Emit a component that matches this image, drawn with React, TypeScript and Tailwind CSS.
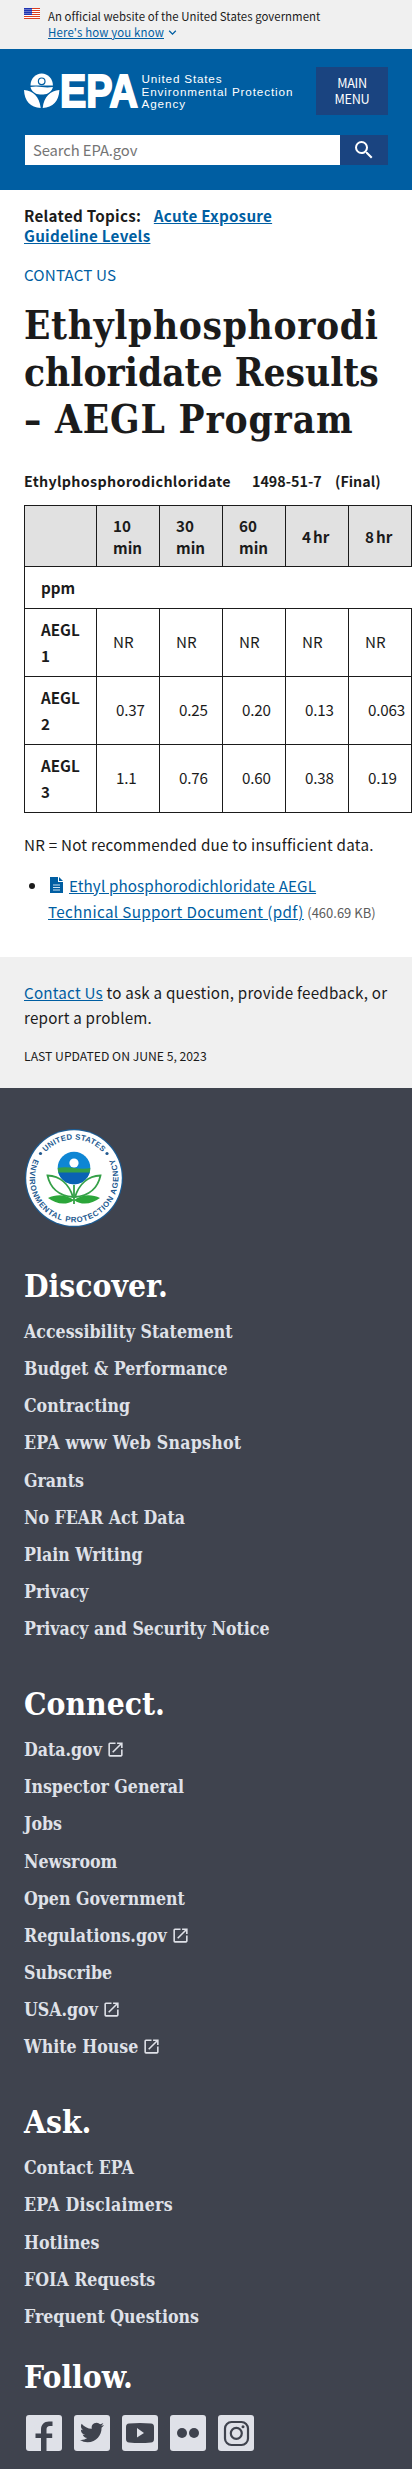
import { ReactNode } from "react";
import { MdOpenInNew, MdSearch, MdExpandMore } from "react-icons/md";

const sans = "font-['Noto_Sans_CJK_SC',sans-serif]";
const serif = "font-['DejaVu_Serif_Condensed','DejaVu_Serif',serif] font-bold";

function Flag() {
  return (
    <svg className="block h-[11px] w-4" viewBox="0 0 16 11">
      <rect width="16" height="11" fill="#fff" />
      {[0, 2, 4, 6, 8, 10].map((y) => (
        <rect key={y} y={y} width="16" height="1" fill="#db3e1f" />
      ))}
      <rect width="8" height="7" fill="#1e33b1" />
      {[1, 3, 5].map((y) =>
        [1, 3, 5, 7].map((x) => <rect key={`${x}-${y}`} x={x - 0.4} y={y} width="0.8" height="0.8" fill="#fff" />)
      )}
    </svg>
  );
}

function EpaLogo() {
  return (
    <svg className="block h-[60px] w-[270px]" viewBox="0 -12 270 60" fill="#fff">
      <path d="M6.500 12.500a11.200 12 0 0 1 22.400 0z" />
      <circle cx="17.700" cy="8.300" r="3.300" fill="none" stroke="#005ea2" strokeWidth="1.200" />
      <path d="M6.500 14q5.500-.8 11.200 0t11.200 0c-.8 4.300-5 7.500-9.600 7.500h-3.200c-4.600 0-8.800-3.200-9.600-7.500z" />
      <path d="M0 17c9 .5 15.500 7 16.700 18C6.500 34.500.5 28 0 17zM35.400 17c-9 .5-15.500 7-16.700 18 10.200-.5 16.200-7 16.700-18z" />
      <text x="36" y="34" fontFamily="Liberation Sans, sans-serif" fontWeight="700" fontSize="46" stroke="#fff" strokeWidth="2" textLength="78" lengthAdjust="spacingAndGlyphs">EPA</text>
      <g fontFamily="Liberation Sans, sans-serif" fontSize="11.700">
        <text x="117.500" y="9.800" textLength="80">United States</text>
        <text x="117.500" y="22.500" textLength="151">Environmental Protection</text>
        <text x="117.500" y="35.200" textLength="43.500">Agency</text>
      </g>
    </svg>
  );
}

function Seal() {
  return (
    <svg className="-ml-0.5 block size-[104px]" viewBox="-52 -52 104 104">
      <defs>
        <path id="ringTop" d="M-38.500 0a38.500 38.500 0 0 1 77 0" />
        <path id="ringBottom" d="M-38.800 -21.500a44.300 44.300 0 1 0 77.600 0" />
        <clipPath id="bloom">
          <circle cy="-10" r="16.300" />
        </clipPath>
      </defs>
      <circle r="49" fill="#1c5c93" />
      <circle r="47.800" fill="#fff" />
      <g fontFamily="Liberation Sans, sans-serif" fontWeight="700" fontSize="7.800" fill="#22598f">
        <text>
          <textPath href="#ringTop" startOffset="50%" textAnchor="middle" textLength="64">UNITED STATES</textPath>
        </text>
        <text>
          <textPath href="#ringBottom" startOffset="50%" textAnchor="middle" textLength="178">ENVIRONMENTAL PROTECTION AGENCY</textPath>
        </text>
      </g>
      <circle cx="-33.500" cy="-24.500" r="1.600" fill="#22598f" />
      <circle cx="33" cy="-24.500" r="1.600" fill="#22598f" />
      <g clipPath="url(#bloom)">
        <rect x="-17" y="-27" width="34" height="34" fill="#0e86d4" />
        <circle cy="-15" r="4.600" fill="#fff" />
        <path d="M-17-10q8-1.500 17 0t17 0v5h-34z" fill="#35a048" />
        <rect x="-17" y="-5.500" width="34" height="13" fill="#0a62b4" />
      </g>
      <g fill="none" stroke="#35a048" strokeWidth="1.800">
        <path d="M0 26V7" />
        <path d="M-1 19C-5 6-14-2-26.500-2.500-24 9-16 18-1 19zM1 19C5 6 14-2 26.500-2.500 24 9 16 18 1 19z" />
      </g>
      <path d="M0 22c-8-6-18-6-26-2 8 6 18 8 26 2zM0 22c8-6 18-6 26-2-8 6-18 8-26 2z" fill="#2ca63a" />
    </svg>
  );
}

function FileIcon() {
  return (
    <svg className="ml-[1.500px] mr-[6.500px] inline-block h-4 w-[13px] align-[-1px]" viewBox="0 0 13 16">
      <path d="M0 0h8v5h5v11H0z" fill="#005ea2" />
      <path d="M9 0l4 4H9z" fill="#005ea2" />
      <path d="M3 8h7M3 10.500h7M3 13h7" stroke="#cfe3f2" strokeWidth="1" />
    </svg>
  );
}

function Social({ children }: { children: ReactNode }) {
  return (
    <svg className="block size-9" viewBox="0 0 36 36">
      <rect width="36" height="36" rx="3" fill="#dfe1e8" />
      {children}
    </svg>
  );
}

const th = "border border-[#1b1b1b] px-4 text-left font-bold";

const headers = [["10", "min"], ["30", "min"], ["60", "min"], ["4 hr"], ["8 hr"]];
const rows = [
  { n: "1", v: ["NR", "NR", "NR", "NR", "NR"] },
  { n: "2", v: ["0.37", "0.25", "0.20", "0.13", "0.063"] },
  { n: "3", v: ["1.1", "0.76", "0.60", "0.38", "0.19"] },
];

function LinkGroup({ title, links, className }: { title: string; links: string[]; className: string }) {
  return (
    <section className={className}>
      <h2 className="text-[31.500px] leading-[38px] text-white">{title}</h2>
      <ul className="mt-[8.500px] text-[17.600px] leading-[37.130px] text-[#dfe1e8]">
        {links.map((l) => (
          <li key={l} className={l.startsWith("EPA") ? "tracking-[.25px]" : "flex items-center"}>
            {l.replace("*", "")}
            {l.endsWith("*") && <MdOpenInNew className="ml-1 size-[19px]" />}
          </li>
        ))}
      </ul>
    </section>
  );
}

export default function App() {
  return (
    <div className={`w-[412px] overflow-hidden bg-white text-[15.200px] text-[#1b1b1b] ${sans}`}>
      <div className="flex h-[49px] gap-2 bg-[#f0f0f0] pl-6 pt-2">
        <Flag />
        <div className="text-[11.400px] leading-4 tracking-[.04px]">
          <p>An official website of the United States government</p>
          <p className="flex items-center text-[#005ea2]">
            <span className="tracking-[.16px] underline">Here's how you know</span>
            <MdExpandMore className="ml-px size-[15px]" />
          </p>
        </div>
      </div>

      <header className="h-[141px] bg-[#005ea2] px-6 pt-[18px]">
        <div className="flex h-12 items-center justify-between">
          <EpaLogo />
          <button className="h-12 w-[72px] bg-[#1a4480] text-[12.700px] leading-4 tracking-[-.3px] text-white">
            MAIN
            <br />
            MENU
          </button>
        </div>
        <div className="mt-5 flex h-[30px]">
          <div className="ml-px flex flex-1 items-center bg-white pl-2 text-[14.800px] tracking-[-.1px] text-[#757575]">Search EPA.gov</div>
          <div className="flex w-12 items-center justify-center bg-[#1a4480] text-white">
            <MdSearch className="size-6" />
          </div>
        </div>
      </header>

      <main className="h-[767px] px-6 pt-[15px]">
        <p className="font-bold leading-5 tracking-[.26px]">
          Related Topics: <a className="ml-[9px] text-[#005ea2] underline">Acute Exposure</a>
          <br />
          <a className="text-[#005ea2] underline">Guideline Levels</a>
        </p>
        <p className="mt-4 leading-[26px] tracking-[.15px] text-[#005ea2]">CONTACT US</p>
        <h1 className={`mt-4 whitespace-nowrap text-[38.500px] leading-[46.850px] ${serif}`}>
          <span className="tracking-[.65px]">Ethylphosphorodi</span>
          <br />
          <span>chloridate Results</span>
          <br />
          <span className="tracking-[.85px]">– AEGL Program</span>
        </h1>
        <p className="mt-[24.500px] flex whitespace-nowrap text-[14.300px] font-bold leading-[26px]">
          <span className="w-[228px] tracking-[.32px]">Ethylphosphorodichloridate</span>
          <span className="w-[83px]">1498-51-7</span>
          <span>(Final)</span>
        </p>
        <table className="mt-[11px] w-[451px] table-fixed border-collapse">
          <colgroup>
            <col className="w-[72px]" />
            {headers.map((_, i) => (
              <col key={i} className="w-[63px]" />
            ))}
            <col className="w-[63px]" />
          </colgroup>
          <thead className="bg-[#e1e1e1]">
            <tr className="h-[61px] leading-[22.500px] [word-spacing:-1.500px]">
              <th className={th} />
              {headers.map((h) => (
                <th key={h[0]} className={th}>
                  {h[0]}
                  {h[1] && <br />}
                  {h[1]}
                </th>
              ))}
              <th className={th} />
            </tr>
          </thead>
          <tbody className="leading-[25.500px]">
            <tr className="h-[42px]">
              <th colSpan={7} className={th}>ppm</th>
            </tr>
            {rows.map((r) => (
              <tr key={r.n} className="h-[68px]">
                <th className={th}>
                  AEGL
                  <br />
                  {r.n}
                </th>
                {r.v.map((v, i) => (
                  <td key={i} className={r.n === "1" ? "border border-[#1b1b1b] pb-0.5 pl-4" : "border border-[#1b1b1b] pb-0.5 pl-[19px] tracking-[-.2px]"}>
                    {v}
                  </td>
                ))}
                <td className="border border-[#1b1b1b]" />
              </tr>
            ))}
          </tbody>
        </table>
        <p className="mt-[18px] leading-[26px] tracking-[.23px]">NR = Not recommended due to insufficient data.</p>
        <ul className="mt-[14.500px] list-disc pl-6 leading-[26px]">
          <li className="whitespace-nowrap">
            <FileIcon />
            <a className="text-[#005ea2] underline">
              <span className="tracking-[.13px]">Ethyl phosphorodichloridate AEGL</span>
              <br />
              <span className="tracking-[.36px]">Technical Support Document (pdf)</span>
            </a>{" "}
            <span className="text-[13px] text-[#5c5c5c]">(460.69 KB)</span>
          </li>
        </ul>
      </main>

      <div className="h-[131px] bg-[#f0f0f0] px-6 pt-[22.500px] leading-[25.500px]">
        <p className="whitespace-nowrap tracking-[.21px]">
          <a className="text-[#005ea2] underline">Contact Us</a> to ask a question, provide feedback, or
          <br />
          report a problem.
        </p>
        <p className="mt-[13px] text-[12.200px]">LAST UPDATED ON JUNE 5, 2023</p>
      </div>

      <footer className={`h-[1381px] bg-[#3f434e] px-6 pt-[38px] ${serif}`}>
        <Seal />
        <LinkGroup
          className="mt-[36.500px]"
          title="Discover."
          links={["Accessibility Statement", "Budget & Performance", "Contracting", "EPA www Web Snapshot", "Grants", "No FEAR Act Data", "Plain Writing", "Privacy", "Privacy and Security Notice"]}
        />
        <LinkGroup
          className="mt-[37.500px]"
          title="Connect."
          links={["Data.gov*", "Inspector General", "Jobs", "Newsroom", "Open Government", "Regulations.gov*", "Subscribe", "USA.gov*", "White House*"]}
        />
        <LinkGroup
          className="mt-[37.500px]"
          title="Ask."
          links={["Contact EPA", "EPA Disclaimers", "Hotlines", "FOIA Requests", "Frequent Questions"]}
        />
        <h2 className="mt-[23px] text-[31.500px] leading-[38px] text-white">Follow.</h2>
        <div className="ml-0.5 mt-[19px] flex gap-3">
          <Social>
            <path d="M15 36V23h-5.500v-4.500H15V15c0-5.500 3-8.500 8-8.500h3.500V11H24c-2.500 0-3.500 1.300-3.500 3.500v4h5.700V23h-5.700v13z" fill="#3f434e" />
          </Social>
          <Social>
            <path transform="translate(6 5.500)" d="M23.950 4.570a10 10 0 0 1-2.820.770 4.960 4.960 0 0 0 2.160-2.720c-.950.550-2.010.950-3.130 1.180a4.920 4.920 0 0 0-8.380 4.480C7.690 8.090 4.070 6.130 1.640 3.160a4.820 4.820 0 0 0-.67 2.480c0 1.710.870 3.210 2.190 4.100a4.900 4.900 0 0 1-2.230-.62v.06a4.920 4.920 0 0 0 3.950 4.830 4.990 4.990 0 0 1-2.210.080 4.940 4.940 0 0 0 4.600 3.420A9.870 9.870 0 0 1 0 19.540a13.990 13.990 0 0 0 7.550 2.210c9.050 0 14-7.500 14-13.980 0-.21 0-.42-.02-.63a9.940 9.940 0 0 0 2.460-2.550z" fill="#3f434e" />
          </Social>
          <Social>
            <path d="M7 8.500q11-1 22 0 3 .3 3 3.500v12q0 3.200-3 3.500-11 1-22 0-3-.3-3-3.500V12q0-3.200 3-3.500z" fill="#3f434e" />
            <path d="M15 13l7 5-7 4.500z" fill="#dfe1e8" />
          </Social>
          <Social>
            <circle cx="12" cy="18" r="5" fill="#3f434e" />
            <circle cx="24" cy="18" r="5" fill="#3f434e" />
          </Social>
          <Social>
            <g fill="none" stroke="#3f434e" strokeWidth="2.200">
              <rect x="7" y="7" width="23" height="23" rx="6.500" />
              <circle cx="18.300" cy="18.300" r="5.500" />
            </g>
            <circle cx="25" cy="11.800" r="1.500" fill="#3f434e" />
          </Social>
        </div>
      </footer>
    </div>
  );
}
